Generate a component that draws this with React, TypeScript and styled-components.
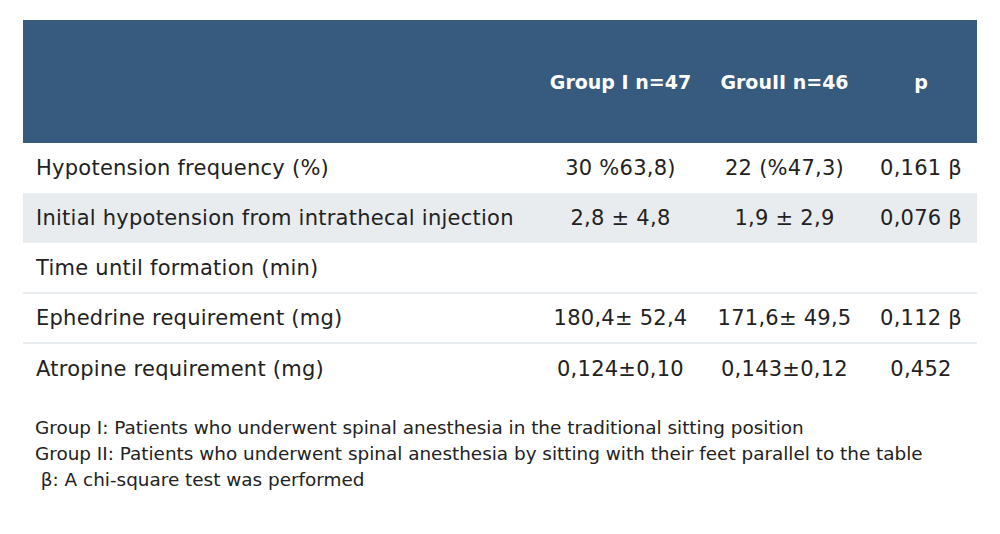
import React from "react";
import styled, { createGlobalStyle } from "styled-components";

const Global = createGlobalStyle`
  html, body { margin: 0; padding: 0; background: #ffffff; }
  body { font-family: "DejaVu Sans", "Noto Sans", sans-serif; color: #222222; }
`;

const Page = styled.div`
  width: 1000px;
  height: 534px;
  box-sizing: border-box;
  padding: 20px 23px 0 23px;
`;

const Table = styled.table`
  width: 954px;
  border-collapse: collapse;
  table-layout: fixed;
`;

const HeadRow = styled.tr`
  background: #375a7f;
  height: 123px;
`;

const Th = styled.th`
  color: #ffffff;
  font-weight: 700;
  font-size: 19px;
  text-align: center;
  vertical-align: middle;
  padding: 0;
  white-space: nowrap;
`;

const Row = styled.tr<{ $shaded?: boolean; $ruled?: boolean }>`
  height: 50px;
  background: ${(p) => (p.$shaded ? "#e9ecef" : "#ffffff")};
  border-top: ${(p) => (p.$ruled ? "2px solid #e9ecef" : "0")};
`;

const Td = styled.td<{ $label?: boolean }>`
  font-size: 21px;
  letter-spacing: 0.25px;
  color: #222222;
  padding: 0 0 0 ${(p) => (p.$label ? "13px" : "0")};
  text-align: ${(p) => (p.$label ? "left" : "center")};
  vertical-align: middle;
  white-space: nowrap;
`;

const Notes = styled.div`
  padding: 22px 0 0 12px;
  font-size: 18.4px;
  line-height: 26px;
  color: #222222;
`;

const rows = [
  { label: "Hypotension frequency (%)", a: "30 %63,8)", b: "22 (%47,3)", p: "0,161 β" },
  { label: "Initial hypotension from intrathecal injection", a: "2,8 ± 4,8", b: "1,9 ± 2,9", p: "0,076 β", shaded: true },
  { label: "Time until formation (min)", a: "", b: "", p: "" },
  { label: "Ephedrine requirement (mg)", a: "180,4± 52,4", b: "171,6± 49,5", p: "0,112 β", ruled: true },
  { label: "Atropine requirement (mg)", a: "0,124±0,10", b: "0,143±0,12", p: "0,452", ruled: true },
];

export default function App() {
  return (
    <Page>
      <Global />
      <Table>
        <colgroup>
          <col style={{ width: 514 }} />
          <col style={{ width: 167 }} />
          <col style={{ width: 161 }} />
          <col style={{ width: 112 }} />
        </colgroup>
        <thead>
          <HeadRow>
            <Th />
            <Th>Group I n=47</Th>
            <Th>GrouII n=46</Th>
            <Th>p</Th>
          </HeadRow>
        </thead>
        <tbody>
          {rows.map((r) => (
            <Row key={r.label} $shaded={r.shaded} $ruled={r.ruled}>
              <Td $label>{r.label}</Td>
              <Td>{r.a}</Td>
              <Td>{r.b}</Td>
              <Td>{r.p}</Td>
            </Row>
          ))}
        </tbody>
      </Table>
      <Notes>
        <div>Group I: Patients who underwent spinal anesthesia in the traditional sitting position</div>
        <div>Group II: Patients who underwent spinal anesthesia by sitting with their feet parallel to the table</div>
        <div>&nbsp;β: A chi-square test was performed</div>
      </Notes>
    </Page>
  );
}
